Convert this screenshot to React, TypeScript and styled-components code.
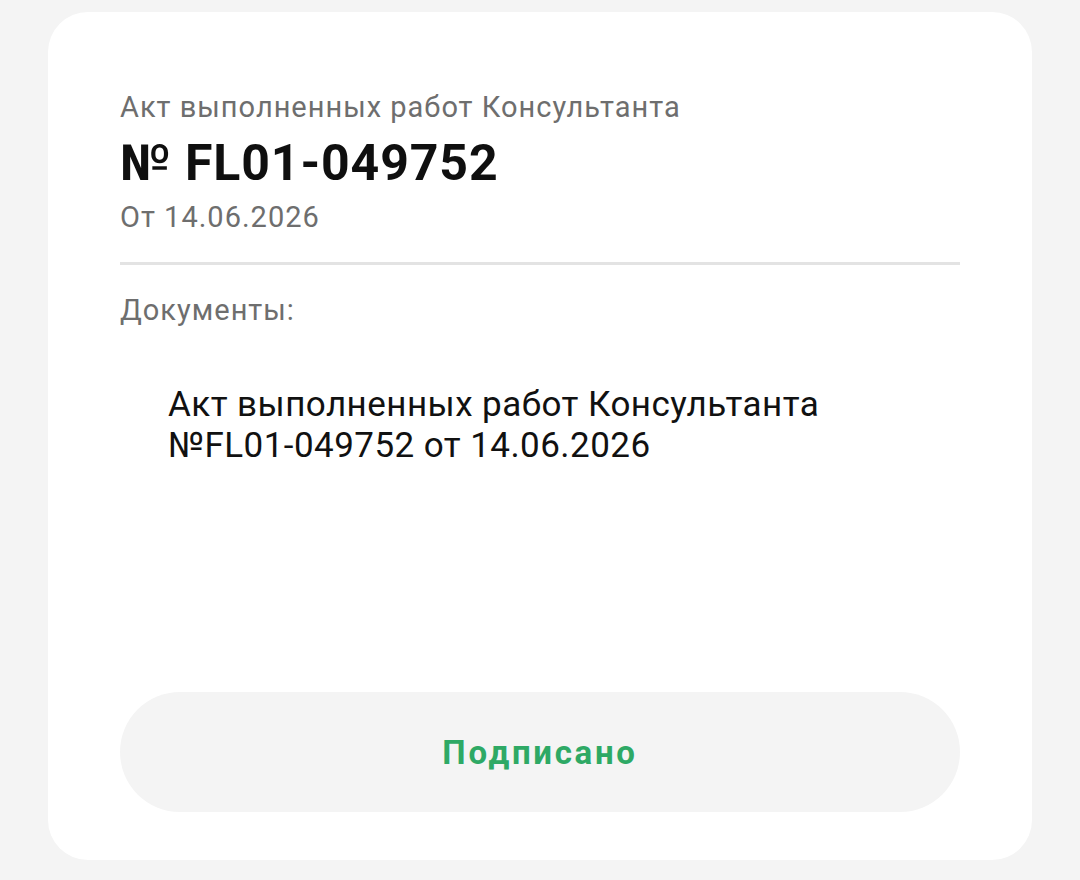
import styled, { createGlobalStyle } from 'styled-components';

const GlobalStyle = createGlobalStyle`
  html, body {
    margin: 0;
    padding: 0;
    background: #f4f4f4;
  }
  body {
    font-family: Roboto, 'Noto Sans', 'Liberation Sans', sans-serif;
    -webkit-font-smoothing: antialiased;
  }
`;

const Page = styled.div`
  width: 1080px;
  height: 880px;
  padding: 12px 48px 20px;
  box-sizing: border-box;
`;

const Card = styled.div`
  display: flex;
  flex-direction: column;
  height: 848px;
  box-sizing: border-box;
  padding: 77px 72px 48px;
  background: #ffffff;
  border-radius: 40px;
`;

const Caption = styled.div`
  font-size: 29px;
  line-height: 36px;
  letter-spacing: 1px;
  color: #6e6e6e;
`;

const Number = styled.div`
  margin-top: 8px;
  font-size: 50px;
  line-height: 60px;
  font-weight: 700;
  letter-spacing: 0.9px;
  color: #0f0f0f;
`;

const DateLine = styled(Caption)`
  margin-top: 6px;
`;

const Divider = styled.div`
  margin-top: 27px;
  height: 3px;
  background: #e3e3e3;
`;

const SectionTitle = styled(Caption)`
  margin-top: 27px;
`;

const DocList = styled.div`
  margin-top: 56px;
  padding-left: 48px;
  display: flex;
  flex-direction: column;
`;

const DocName = styled.div`
  font-size: 35px;
  line-height: 41px;
  letter-spacing: 0.45px;
  color: #111111;
`;

const StatusButton = styled.div`
  margin-top: auto;
  height: 120px;
  border-radius: 60px;
  background: #f4f4f4;
  display: flex;
  align-items: center;
  justify-content: center;
  font-size: 33px;
  font-weight: 700;
  letter-spacing: 2.7px;
  color: #2ea965;
`;

export default function App() {
  return (
    <Page>
      <GlobalStyle />
      <Card>
        <Caption>Акт выполненных работ Консультанта</Caption>
        <Number>№ FL01-049752</Number>
        <DateLine>От 14.06.2026</DateLine>
        <Divider />
        <SectionTitle>Документы:</SectionTitle>
        <DocList>
          <DocName>
            Акт выполненных работ Консультанта
            <br />
            №FL01-049752 от 14.06.2026
          </DocName>
        </DocList>
        <StatusButton>Подписано</StatusButton>
      </Card>
    </Page>
  );
}
